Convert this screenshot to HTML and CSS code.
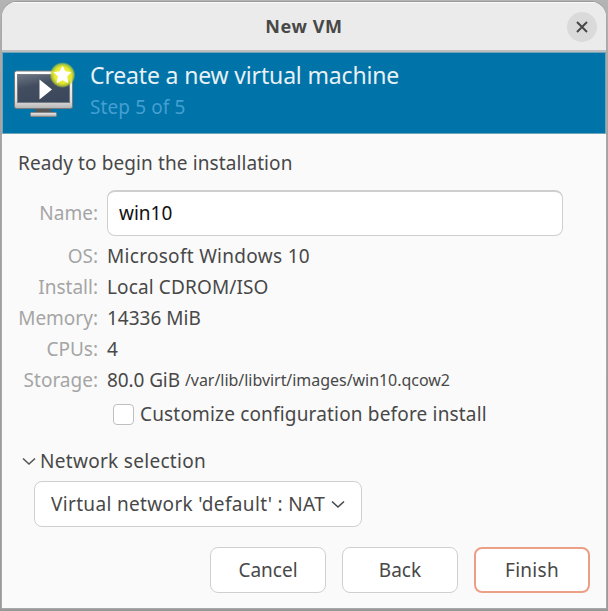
FILE: index.html
```html
<!DOCTYPE html>
<html lang="en">
<head>
<meta charset="utf-8">
<title>New VM</title>
<link rel="stylesheet" href="styles.css">
</head>
<body>
<main class="window">
  <header class="titlebar">
    <h1 class="title">New VM</h1>
    <button class="close" aria-label="Close">
      <svg width="12" height="12" viewBox="0 0 12 12"><path d="M1 1L11 11M11 1L1 11" fill="none" stroke="#484848" stroke-width="2"/></svg>
    </button>
  </header>
  <section class="banner">
    <svg class="monitor" width="64" height="58" viewBox="0 0 64 58">
      <defs>
        <linearGradient id="frame" x1="0" y1="0" x2="0" y2="1"><stop offset="0" stop-color="#fff"/><stop offset=".8" stop-color="#ddd"/><stop offset="1" stop-color="#b4b4b4"/></linearGradient>
        <linearGradient id="screen" x1="0" y1="0" x2=".4" y2="1"><stop offset="0" stop-color="#6e7785"/><stop offset=".45" stop-color="#424e60"/><stop offset="1" stop-color="#3c485b"/></linearGradient>
        <linearGradient id="foot" x1="0" y1="0" x2="0" y2="1"><stop offset="0" stop-color="#eee"/><stop offset="1" stop-color="#aaa"/></linearGradient>
        <radialGradient id="glow"><stop offset="0" stop-color="#fffc70"/><stop offset=".65" stop-color="#e4e72a"/><stop offset=".85" stop-color="#c6d82c" stop-opacity=".75"/><stop offset="1" stop-color="#a0c040" stop-opacity="0"/></radialGradient>
      </defs>
      <rect x="23" y="46" width="16" height="5" fill="#565656"/>
      <rect x="18.5" y="50.5" width="26" height="4" rx="1" fill="url(#foot)" stroke="#858585"/>
      <rect x="2.5" y="9" width="58" height="37.5" rx="2" fill="url(#frame)" stroke="#77797b"/>
      <rect x="5.5" y="12.5" width="52" height="28" fill="url(#screen)" stroke="#747b84"/>
      <path d="M27.5 17.5V37.5L40 27.5Z" fill="#fff"/>
      <circle cx="50.5" cy="13" r="13" fill="url(#glow)"/>
      <path d="M50.5 4.5L53 9.7L58.7 10.5L54.6 14.4L55.8 20.5L50.5 17.7L45.2 20.5L46.4 14.4L42.3 10.5L48 9.7Z" fill="#fff" stroke="#fff" stroke-linejoin="round"/>
    </svg>
    <div class="headings">
      <h2 class="heading"><span>Create a new virtual machine</span></h2>
      <p class="step"><span>Step 5 of 5</span></p>
    </div>
  </section>
  <section class="content">
    <p class="ready"><span>Ready to begin the installation</span></p>
    <div class="fields">
      <label class="label" for="name">Name:</label>
      <input class="entry" id="name" value="win10">
      <span class="label">OS:</span><span class="value os">Microsoft Windows 10</span>
      <span class="label">Install:</span><span class="value install">Local CDROM/ISO</span>
      <span class="label">Memory:</span><span class="value memory">14336 MiB</span>
      <span class="label">CPUs:</span><span class="value">4</span>
      <span class="label">Storage:</span><span class="value storage"><span class="size">80.0 GiB</span><span class="path">/var/lib/libvirt/images/win10.qcow2</span></span>
    </div>
    <div class="customize"><span class="checkbox"></span><span class="customize-text">Customize configuration before install</span></div>
    <div class="expander">
      <svg width="14" height="9" viewBox="0 0 14 9"><path d="M1 1.5L7 7L13 1.5" fill="none" stroke="#555" stroke-width="1.6"/></svg>
      <span class="network-title">Network selection</span>
    </div>
    <button class="button combo"><span class="network-name">Virtual network 'default' : NAT</span>
      <svg width="14" height="9" viewBox="0 0 14 9"><path d="M1 1.5L7 7L13 1.5" fill="none" stroke="#484848" stroke-width="1.6"/></svg>
    </button>
    <footer class="actions">
      <button class="button"><span class="cancel">Cancel</span></button>
      <button class="button"><span class="back">Back</span></button>
      <button class="button primary"><span class="finish">Finish</span></button>
    </footer>
  </section>
</main>
</body>
</html>
```

FILE: styles.css
```css
* { box-sizing: border-box; }
body {
  margin: 0;
  width: 608px;
  height: 611px;
  padding: 1px 1px 2px;
  overflow: hidden;
  background: linear-gradient(#b4b4b4, #a3a3a3 15%, #999);
  font: 19px/31px "Noto Sans", sans-serif;
  color: #484848;
}
h1, h2, p { margin: 0; font-weight: 400; }
span { white-space: nowrap; }
button, input { font: inherit; color: inherit; }
svg { display: block; flex: none; }
.window {
  height: 608px;
  border: 1px solid #a9a9a9;
  border-top-color: #999;
  border-radius: 16px 16px 0 0;
  background: #fafafa;
  overflow: hidden;
}
.titlebar {
  height: 50px;
  display: grid;
  grid-template-columns: 39px 1fr 39px;
  align-items: center;
  border-top: 1px solid #fafafa;
  border-bottom: 2px solid #bdbdbd;
  background: #ebebeb;
}
.title {
  grid-column: 2;
  text-align: center;
  font-size: 18px;
  font-weight: 700;
  line-height: 44px;
  letter-spacing: .6px;
  padding-bottom: 2px;
}
.close {
  width: 30px;
  height: 30px;
  display: grid;
  place-items: center;
  padding: 0;
  border: 0;
  border-radius: 50%;
  background: #dadada;
}
.banner {
  height: 82px;
  display: flex;
  border: 1px solid #6fa4bd;
  background: #0073a9;
}
.monitor { margin: 9px 0 0 9px; }
.headings { margin-left: 14px; padding-top: 4px; }
.heading { font-size: 23px; line-height: 36px; letter-spacing: -.16px; color: #e8f1f5; }
.step { line-height: 29px; letter-spacing: .1px; color: #449fd2; }
.content { padding: 14px 0 0 16px; }
.ready { height: 42px; letter-spacing: .1px; }
.fields {
  display: grid;
  grid-template-columns: 80px 456px;
  column-gap: 9px;
  grid-template-rows: 51px repeat(5, 31px);
}
.label { text-align: right; color: #a5a5a5; white-space: nowrap; }
label.label { line-height: 46px; }
.entry {
  width: 456px;
  height: 46px;
  padding: 0 11px 2px;
  border: 1px solid #cfcfcf;
  border-top-width: 2px;
  border-radius: 8px;
  background: #fff;
  color: #111;
}
.os { letter-spacing: .3px; }
.install { letter-spacing: .13px; }
.storage { display: flex; gap: 5px; }
.size { letter-spacing: -.1px; }
.path { font-size: 16px; letter-spacing: -.04px; }
.customize { height: 37px; display: flex; align-items: center; padding-left: 95px; gap: 6px; }
.customize-text { letter-spacing: .17px; }
.checkbox { width: 21px; height: 21px; border: 1px solid #bfbfbf; border-radius: 4px; background: #fff; }
.expander { display: flex; align-items: center; gap: 4px; height: 31px; margin: 13px 0 4px 4px; }
.network-title { letter-spacing: .3px; }
.button {
  width: 116px;
  height: 46px;
  padding: 0;
  border: 1px solid #cfcfcf;
  border-radius: 8px;
  background: #fff;
}
.combo {
  width: 328px;
  display: flex;
  align-items: center;
  justify-content: space-between;
  margin-left: 16px;
  padding: 0 16px;
}
.network-name { letter-spacing: .34px; }
.finish { letter-spacing: .3px; }
.actions { display: flex; justify-content: flex-end; gap: 16px; margin: 20px 16px 0 0; }
.primary { border: 2px solid #ec9f84; }
```
